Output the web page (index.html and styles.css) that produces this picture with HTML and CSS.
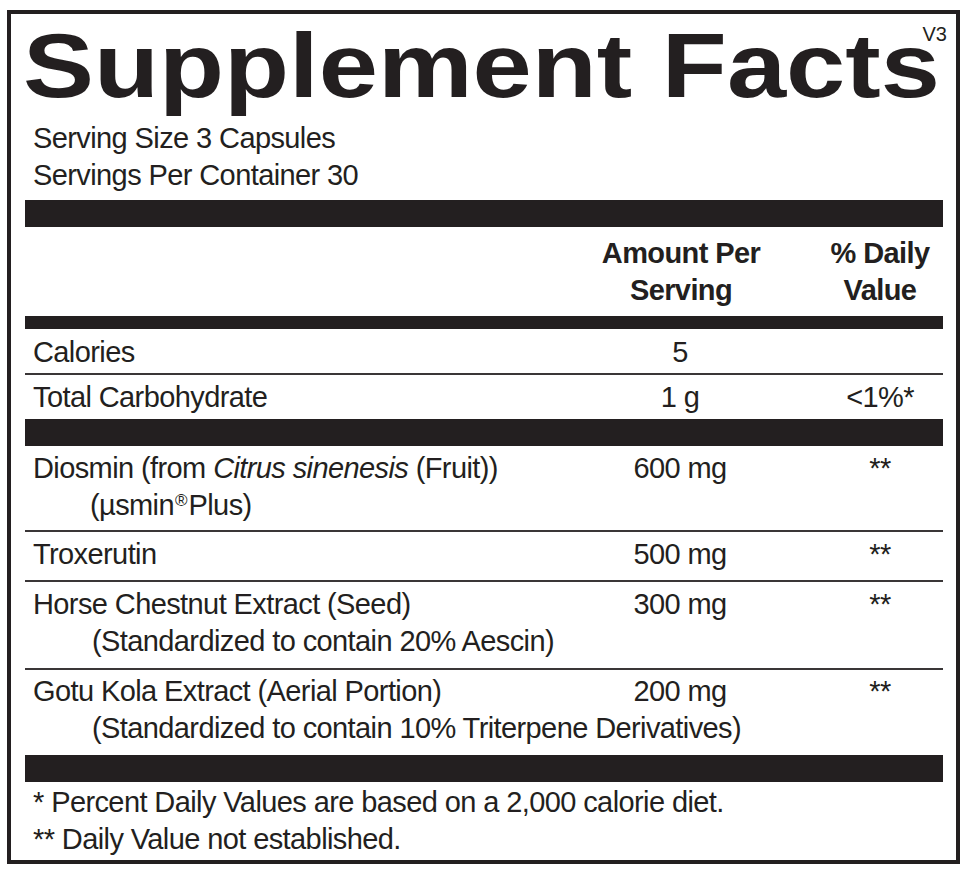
FILE: index.html
```html
<!DOCTYPE html>
<html lang="en">
<head>
<meta charset="utf-8">
<title>Supplement Facts</title>
<link rel="stylesheet" href="styles.css">
</head>
<body>
<div class="label">
  <div class="title"><span class="title-text">Supplement Facts</span></div>
  <span class="ver">V3</span>
  <div class="serving">
    <div>Serving Size 3 Capsules</div>
    <div>Servings Per Container 30</div>
  </div>
  <div class="bar thick"></div>
  <div class="row head">
    <div class="name"></div>
    <div class="amt">Amount Per<br>Serving</div>
    <div class="dv">% Daily<br>Value</div>
  </div>
  <div class="bar mid"></div>
  <div class="row sep r-cal">
    <div class="name">Calories</div>
    <div class="amt">5</div>
    <div class="dv"></div>
  </div>
  <div class="row r-carb">
    <div class="name">Total Carbohydrate</div>
    <div class="amt">1 g</div>
    <div class="dv">&lt;1%*</div>
  </div>
  <div class="bar thick"></div>
  <div class="row sep r-dio">
    <div class="name">Diosmin (from <i>Citrus sinenesis</i> (Fruit))<div class="sub sub-short">(µsmin<span class="reg">®</span>Plus)</div></div>
    <div class="amt">600 mg</div>
    <div class="dv">**</div>
  </div>
  <div class="row sep r-trox">
    <div class="name">Troxerutin</div>
    <div class="amt">500 mg</div>
    <div class="dv">**</div>
  </div>
  <div class="row sep r-horse">
    <div class="name">Horse Chestnut Extract (Seed)<div class="sub">(Standardized to contain 20% Aescin)</div></div>
    <div class="amt">300 mg</div>
    <div class="dv">**</div>
  </div>
  <div class="row r-gotu">
    <div class="name">Gotu Kola Extract (Aerial Portion)<div class="sub">(Standardized to contain 10% Triterpene Derivatives)</div></div>
    <div class="amt">200 mg</div>
    <div class="dv">**</div>
  </div>
  <div class="bar thick"></div>
  <div class="foot">
    <div>* Percent Daily Values are based on a 2,000 calorie diet.</div>
    <div>** Daily Value not established.</div>
  </div>
</div>
</body>
</html>
```
FILE: styles.css
```css
html, body {
  margin: 0;
  padding: 0;
  background: #ffffff;
}

body {
  font-family: "Liberation Sans", Arial, Helvetica, sans-serif;
  color: #231f20;
}

.label {
  position: relative;
  box-sizing: border-box;
  margin: 10px 0 0 7px;
  width: 953px;
  height: 854px;
  border: 4px solid #231f20;
  padding: 0 13px 0 14px;
  font-size: 29px;
  letter-spacing: -0.6px;
  line-height: 37px;
}

.title {
  height: 103px;
  line-height: 103px;
  margin-left: -2px;
  font-size: 91px;
  font-weight: bold;
  letter-spacing: 0;
  white-space: nowrap;
}

.title-text {
  display: inline-block;
  transform: scaleX(1.17);
  transform-origin: left center;
}

.ver {
  position: absolute;
  top: 10px;
  right: 9px;
  font-size: 20px;
  line-height: 20px;
  letter-spacing: 0;
}

.serving {
  margin-top: 3px;
  padding-left: 8px;
}

.bar {
  background: #231f20;
}

.bar.thick {
  height: 27px;
}

.serving + .bar.thick {
  margin-top: 6px;
}

.bar.mid {
  height: 13px;
}

.row {
  display: grid;
  grid-template-columns: 522px 266px 130px;
  white-space: nowrap;
}

.row.sep {
  border-bottom: 2px solid #3a3637;
}

.name {
  padding-left: 8px;
}

.amt,
.dv {
  text-align: center;
}

.dv {
  padding-left: 4px;
}

.head {
  padding: 8px 0 7px;
  font-weight: bold;
}

.head .amt {
  padding-left: 2px;
}

.r-cal { padding: 5px 0 2px; }
.r-carb { padding: 4px 0 3px; }
.r-dio { padding: 4px 0 6px; }
.r-trox { padding: 4px 0 7px; }
.r-horse { padding: 4px 0 8px; }
.r-gotu { padding: 3px 0 8px; }

.sub {
  padding-left: 59px;
}

.sub-short {
  padding-left: 57px;
}

.reg {
  display: inline-block;
  font-size: 17px;
  line-height: 17px;
  vertical-align: 9px;
  letter-spacing: 0;
  margin: 0 1px 0 1px;
}

.foot {
  padding: 2px 0 0 8px;
  white-space: nowrap;
}
```
